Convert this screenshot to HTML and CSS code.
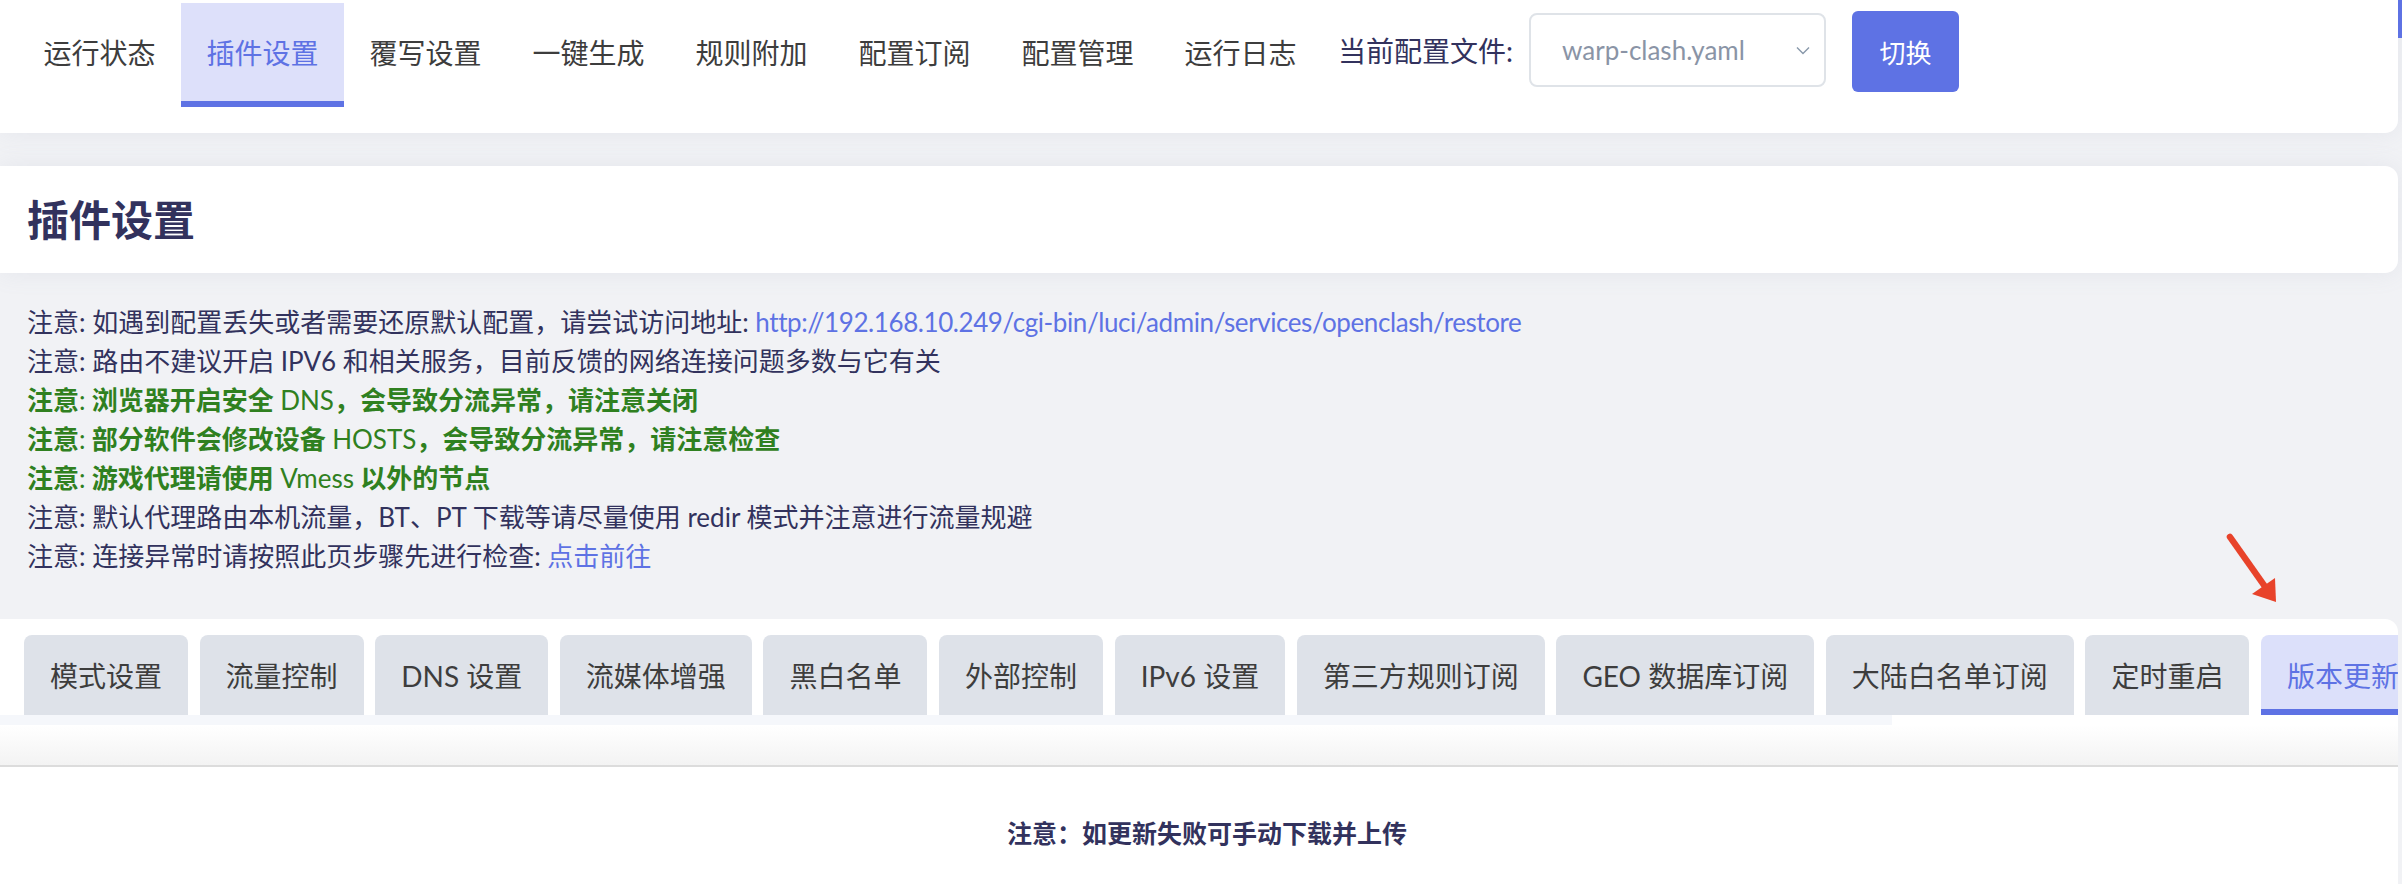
FILE: index.html
```html
<!DOCTYPE html>
<html lang="zh-CN">
<head>
<meta charset="utf-8">
<title>OpenClash 插件设置</title>
<link rel="stylesheet" href="styles.css">
</head>
<body>
<div class="page">
  <header class="topbar">
    <nav class="mainnav">
      <a class="nav-item">运行状态</a>
      <a class="nav-item active">插件设置</a>
      <a class="nav-item">覆写设置</a>
      <a class="nav-item">一键生成</a>
      <a class="nav-item">规则附加</a>
      <a class="nav-item">配置订阅</a>
      <a class="nav-item">配置管理</a>
      <a class="nav-item">运行日志</a>
    </nav>
    <div class="cfg">
      <span class="cfg-label">当前配置文件:</span>
      <div class="select">
        <span class="select-text">warp-clash.yaml</span>
        <svg class="chev" width="14" height="9" viewBox="0 0 14 9"><path d="M1 1.5 L7 7.5 L13 1.5" fill="none" stroke="#8898aa" stroke-width="1.4"/></svg>
      </div>
      <button class="btn">切换</button>
    </div>
  </header>

  <section class="title-card">
    <h2 class="title">插件设置</h2>
  </section>

  <div class="notes">
    <p>注意: 如遇到配置丢失或者需要还原默认配置，请尝试访问地址: <a class="link url">http://192.168.10.249/cgi-bin/luci/admin/services/openclash/restore</a></p>
    <p>注意: 路由不建议开启 IPV6 和相关服务，目前反馈的网络连接问题多数与它有关</p>
    <p class="warn">注意<span class="lat">:</span> 浏览器开启安全 <span class="lat">DNS</span>，会导致分流异常，请注意关闭</p>
    <p class="warn">注意<span class="lat">:</span> 部分软件会修改设备 <span class="lat">HOSTS</span>，会导致分流异常，请注意检查</p>
    <p class="warn">注意<span class="lat">:</span> 游戏代理请使用 <span class="lat">Vmess</span> 以外的节点</p>
    <p>注意: 默认代理路由本机流量，BT、PT 下载等请尽量使用 redir 模式并注意进行流量规避</p>
    <p>注意: 连接异常时请按照此页步骤先进行检查: <a class="link">点击前往</a></p>
  </div>

  <section class="panel">
    <ul class="tabs">
      <li class="tab">模式设置</li>
      <li class="tab">流量控制</li>
      <li class="tab">DNS 设置</li>
      <li class="tab">流媒体增强</li>
      <li class="tab">黑白名单</li>
      <li class="tab">外部控制</li>
      <li class="tab">IPv6 设置</li>
      <li class="tab">第三方规则订阅</li>
      <li class="tab">GEO 数据库订阅</li>
      <li class="tab">大陆白名单订阅</li>
      <li class="tab">定时重启</li>
      <li class="tab active">版本更新</li>
    </ul>
    <div class="tab-strip"></div>
    <div class="fade"></div>
    <p class="update-note">注意：如更新失败可手动下载并上传</p>
  </section>
</div>

<div class="scroll-thumb"></div>

<svg class="arrow" width="70" height="80" viewBox="0 0 70 80">
  <line x1="10" y1="7" x2="46" y2="58" stroke="#e8432a" stroke-width="6.5" stroke-linecap="round"/>
  <polygon points="56,72 32,64 55,48" fill="#e8432a"/>
</svg>
</body>
</html>
```

FILE: styles.css
```css
html, body {
  margin: 0;
  padding: 0;
}

body {
  background: #f1f2f5;
  font-family: Lato, "Noto Sans CJK SC", sans-serif;
  color: #32325d;
  width: 2402px;
  height: 884px;
  overflow: hidden;
  position: relative;
}

.page {
  margin-right: 4px;
}

/* ---------- top bar ---------- */
.topbar {
  background: #fff;
  height: 133px;
  border-radius: 0 0 13px 0;
  box-shadow: 0 0 24px rgba(136, 152, 170, 0.12);
  display: flex;
  align-items: flex-start;
  padding-left: 18px;
  box-sizing: border-box;
}

.mainnav {
  display: flex;
  padding-top: 3px;
}

.nav-item {
  box-sizing: border-box;
  width: 163px;
  height: 104px;
  display: flex;
  align-items: center;
  justify-content: center;
  font-size: 28px;
  color: #3d3d3d;
  border-bottom: 6px solid transparent;
  font-family: "Noto Sans CJK SC", sans-serif;
}

.nav-item.active {
  background: #dde0fa;
  color: #5e72e4;
  border-bottom-color: #5e72e4;
}

.cfg {
  display: flex;
  align-items: center;
  margin-left: 16px;
  margin-top: 11px;
  height: 81px;
}

.cfg-label {
  font-size: 28px;
  color: #32325d;
  margin-top: -4px;
}

.select {
  box-sizing: border-box;
  width: 297px;
  height: 74px;
  margin-left: 16px;
  margin-top: -3px;
  border: 2px solid #dfe3e8;
  border-radius: 8px;
  display: flex;
  align-items: center;
  justify-content: space-between;
  padding: 0 14px 0 31px;
}

.select-text {
  font-size: 26px;
  color: #8a94a6;
  font-family: Lato, sans-serif;
}

.chev {
  display: block;
}

.btn {
  margin-left: 26px;
  width: 107px;
  height: 81px;
  border: 0;
  border-radius: 6px;
  background: #5e72e4;
  color: #fff;
  font-size: 26px;
  font-family: "Noto Sans CJK SC", sans-serif;
  padding: 0;
}

/* ---------- title ---------- */
.title-card {
  background: #fff;
  margin-top: 33px;
  height: 107px;
  border-radius: 0 13px 13px 0;
  box-shadow: 0 0 24px rgba(136, 152, 170, 0.12);
  display: flex;
  align-items: center;
  padding-left: 27px;
}

.title {
  margin: 0;
  font-size: 42px;
  font-weight: 700;
  color: #32325d;
  font-family: "Noto Sans CJK SC", sans-serif;
  line-height: 1;
  margin-top: -3px;
}

/* ---------- notes ---------- */
.notes {
  padding: 30px 27px 43px;
  font-size: 26px;
  line-height: 39px;
}

.notes p {
  margin: 0;
  white-space: nowrap;
}

.notes .warn {
  color: #2f8020;
  font-weight: 700;
}

.notes .warn .lat {
  font-weight: 400;
}

.link {
  color: #5e72e4;
  text-decoration: none;
}

.link.url {
  letter-spacing: -0.42px;
}

/* ---------- panel ---------- */
.panel {
  background: #fff;
  border-radius: 0 13px 0 0;
  height: 265px;
  padding-top: 16px;
  box-sizing: border-box;
  overflow: hidden;
}

.tabs {
  list-style: none;
  margin: 0;
  padding: 0 0 0 24px;
  display: flex;
  gap: 11.6px;
  height: 80px;
  overflow: hidden;
}

.tab {
  flex: none;
  box-sizing: border-box;
  height: 80px;
  padding: 0 26px;
  display: flex;
  align-items: center;
  background: #dee2e9;
  border-radius: 8px 8px 0 0;
  font-size: 28px;
  color: #3d3d3d;
  white-space: nowrap;
}

.tab.active {
  background: #dce0fa;
  color: #5e72e4;
  border-bottom: 6px solid #5e72e4;
  padding-top: 6px;
}

.tab-strip {
  width: 1892px;
  height: 10px;
  background: #f5f7fb;
}

.fade {
  height: 40px;
  background: linear-gradient(#ffffff, #f3f3f3);
  border-bottom: 2px solid #dcdcdc;
}

.update-note {
  margin: 46px 0 0;
  padding-left: 16px;
  text-align: center;
  font-size: 25px;
  line-height: 39px;
  font-weight: 700;
  color: #32325d;
  font-family: "Noto Sans CJK SC", sans-serif;
}

/* ---------- overlays ---------- */
.scroll-thumb {
  position: absolute;
  top: 0;
  right: 0;
  width: 4px;
  height: 38px;
  background: #5e72e4;
}

.arrow {
  position: absolute;
  left: 2220px;
  top: 530px;
}
```
